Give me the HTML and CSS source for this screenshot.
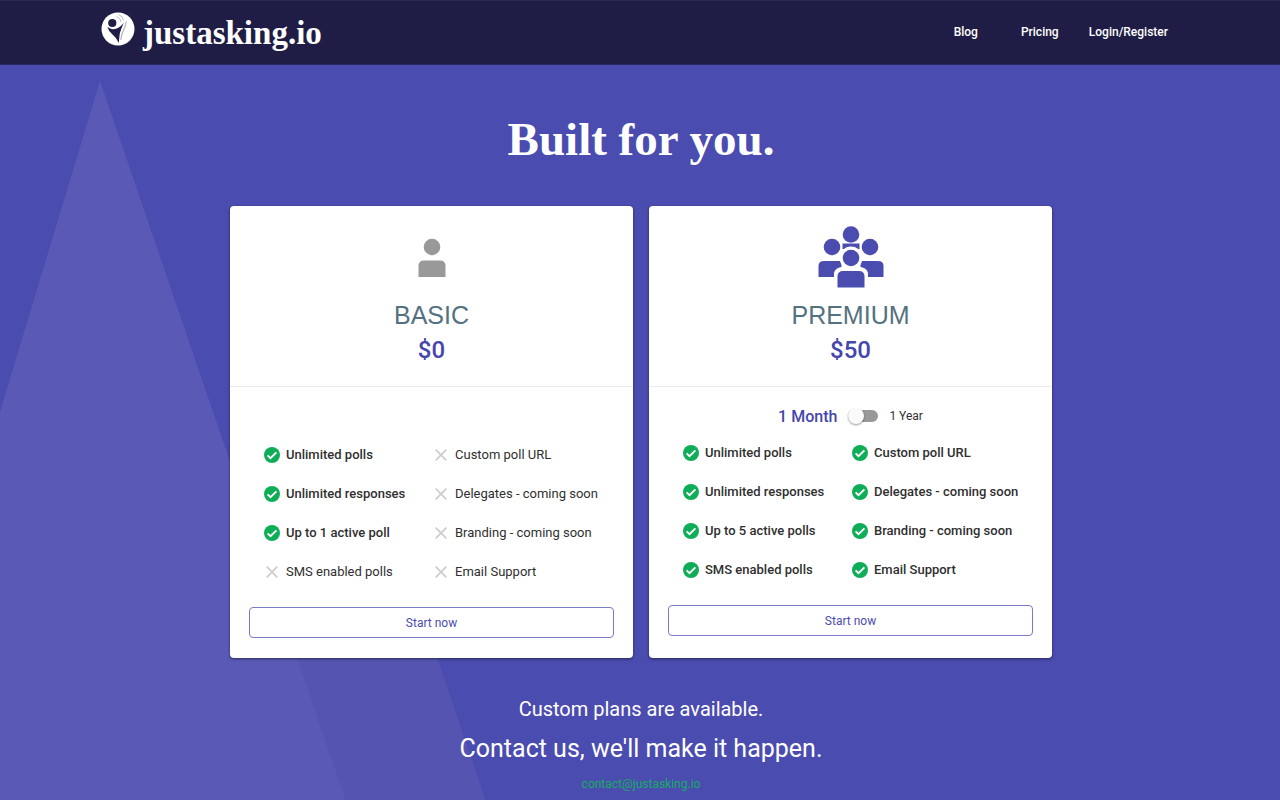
FILE: index.html
```html
<!DOCTYPE html>
<html lang="en">
<head>
<meta charset="utf-8">
<meta name="viewport" content="width=device-width, initial-scale=1">
<title>Pricing - justasking.io</title>
<link rel="stylesheet" href="styles.css">
</head>
<body>
<svg class="defs" aria-hidden="true">
  <symbol id="check" viewBox="0 0 16 16">
    <circle cx="8" cy="8" r="8" fill="#0fad57"/>
    <path d="M3.6 8.3 6.5 11.2 12.4 5.3" fill="none" stroke="#fff" stroke-width="1.9"/>
  </symbol>
  <symbol id="cross" viewBox="0 0 16 16">
    <path d="M2.7 2.7 13.3 13.3M13.3 2.7 2.7 13.3" fill="none" stroke="#cdcdcf" stroke-width="1.7"/>
  </symbol>
</svg>
<header class="topbar">
  <div class="topbar-inner">
    <a class="brand" href="#">
      <svg class="brand-mark" viewBox="0 0 34 34" aria-hidden="true">
        <circle cx="17" cy="17" r="16.5" fill="#fff"/>
        <circle cx="11.3" cy="11" r="4.1" fill="#1f1d45"/>
        <path d="M6.3 14.8Q10 18.3 15 16.8 20 15 22.8 10.5 19.8 17.5 18.7 22L17.7 31Q15.5 25.500 11.500 22.500 7.500 19.500 6.300 14.800Z" fill="#1f1d45"/>
        <path d="M15.500 4.500Q19.500 5.500 20 10M18 2.800Q22 4.200 22.500 8.500" fill="none" stroke="#b9b8c6" stroke-width="1"/>
        <path d="M25.300 9.500C24.500 16 20.800 19 19.800 28" fill="none" stroke="#b9b8c6" stroke-width="1.300"/>
      </svg>
      <span class="brand-name">justasking.io</span>
    </a>
    <nav class="nav">
      <a href="#">Blog</a>
      <a href="#">Pricing</a>
      <a href="#">Login/Register</a>
    </nav>
  </div>
</header>
<main class="hero">
  <svg class="peaks" viewBox="0 0 500 800" aria-hidden="true">
    <path d="M310 220 535 880H100Z" fill="#5555b1"/>
    <path d="M100 16 395 880H-161Z" fill="#5a5ab6"/>
  </svg>
  <h1 class="title">Built for you.</h1>
  <div class="plans">
    <section class="card">
      <div class="card-head">
        <svg class="plan-icon" viewBox="0 0 66 64" aria-hidden="true">
          <g fill="#999">
            <circle cx="33" cy="22" r="8.3"/>
            <path d="M19.500 52V41Q19.500 35.500 25 35.500H41Q46.500 35.500 46.500 41V52Z"/>
          </g>
        </svg>
        <h2 class="plan-name">BASIC</h2>
        <p class="price">$0</p>
      </div>
      <div class="card-body">
        <div class="term term-empty"></div>
        <ul class="features">
          <li class="on"><svg><use href="#check"/></svg>Unlimited polls</li>
          <li><svg><use href="#cross"/></svg>Custom poll URL</li>
          <li class="on"><svg><use href="#check"/></svg>Unlimited responses</li>
          <li><svg><use href="#cross"/></svg>Delegates - coming soon</li>
          <li class="on"><svg><use href="#check"/></svg>Up to 1 active poll</li>
          <li><svg><use href="#cross"/></svg>Branding - coming soon</li>
          <li><svg><use href="#cross"/></svg>SMS enabled polls</li>
          <li><svg><use href="#cross"/></svg>Email Support</li>
        </ul>
        <button class="start" type="button">Start now</button>
      </div>
    </section>
    <section class="card">
      <div class="card-head">
        <svg class="plan-icon" viewBox="0 0 66 64" aria-hidden="true">
          <g fill="#4b4cb0">
            <circle cx="33" cy="9.500" r="8.300"/>
            <path d="M24.500 18.500H41.500V24H24.500Z"/>
            <circle cx="14" cy="22" r="8.300"/>
            <circle cx="52" cy="22" r="8.300"/>
            <path d="M.5 52V41Q.5 36 6 36H60Q65.500 36 65.500 41V52Z"/>
            <path d="M16 53V48Q17 43 23.500 42V30H42.500V42Q49 43 50 48V53Z" fill="#fff"/>
            <circle cx="33" cy="33" r="11.500" fill="#fff"/>
            <circle cx="33" cy="33" r="8.300"/>
            <path d="M19.500 62.500V51.500Q19.500 46 25 46H41Q46.500 46 46.500 51.500V62.500Z"/>
          </g>
        </svg>
        <h2 class="plan-name">PREMIUM</h2>
        <p class="price">$50</p>
      </div>
      <div class="card-body">
        <div class="term">
          <span class="term-active">1 Month</span>
          <input class="switch" id="yearly" type="checkbox" role="switch">
          <label class="term-other" for="yearly">1 Year</label>
        </div>
        <ul class="features">
          <li class="on"><svg><use href="#check"/></svg>Unlimited polls</li>
          <li class="on"><svg><use href="#check"/></svg>Custom poll URL</li>
          <li class="on"><svg><use href="#check"/></svg>Unlimited responses</li>
          <li class="on"><svg><use href="#check"/></svg>Delegates - coming soon</li>
          <li class="on"><svg><use href="#check"/></svg>Up to 5 active polls</li>
          <li class="on"><svg><use href="#check"/></svg>Branding - coming soon</li>
          <li class="on"><svg><use href="#check"/></svg>SMS enabled polls</li>
          <li class="on"><svg><use href="#check"/></svg>Email Support</li>
        </ul>
        <button class="start" type="button">Start now</button>
      </div>
    </section>
  </div>
  <div class="contact">
    <p class="contact-lead">Custom plans are available.</p>
    <p class="contact-main">Contact us, we'll make it happen.</p>
    <a class="contact-mail" href="mailto:contact@justasking.io">contact@justasking.io</a>
  </div>
</main>
</body>
</html>
```

FILE: styles.css
```css
* {
  box-sizing: border-box;
}

body {
  display: flex;
  flex-direction: column;
  min-height: 100vh;
  margin: 0;
  background: #4b4cb0;
  color: #fff;
  font-family: Roboto, "Liberation Sans", sans-serif;
}

h1, h2, p, ul {
  margin: 0;
  padding: 0;
}

.defs {
  display: none;
}

.topbar {
  background: #1f1d45;
  border-top: 1px solid #2a2850;
  border-bottom: 1px solid #2b2963;
}

.topbar-inner {
  display: flex;
  align-items: center;
  justify-content: space-between;
  max-width: 1080px;
  min-height: 63px;
  margin: 0 auto;
}

.brand {
  display: flex;
  align-items: center;
  gap: 8px;
  color: #fff;
  text-decoration: none;
}

.brand-mark {
  width: 34px;
  height: 34px;
  margin: 0 0 8px 1px;
}

.brand-name {
  font: bold 33px/40px "Liberation Serif", serif;
}

.nav {
  display: flex;
  padding-bottom: 2px;
}

.nav a {
  min-width: 74px;
  padding: 0 12px;
  color: #fff;
  font-size: 12px;
  font-weight: 500;
  line-height: 32px;
  text-align: center;
  text-decoration: none;
}

.hero {
  position: relative;
  flex: 1;
  overflow: hidden;
  padding: 46px 16px 6px 18px;
}

.peaks {
  position: absolute;
  top: 0;
  left: 0;
  width: 500px;
  height: 800px;
  overflow: visible;
}

.title {
  position: relative;
  font: bold 47px/56px "Liberation Serif", serif;
  text-align: center;
}

.plans {
  position: relative;
  display: grid;
  grid-template-columns: 1fr 1fr;
  gap: 16px;
  max-width: 822px;
  margin: 39px auto 0;
}

.card {
  display: flex;
  flex-direction: column;
  background: #fff;
  border-radius: 4px;
  box-shadow: 0 1px 3px rgba(0, 0, 0, 0.5);
  color: #2f2f2f;
}

.card-head {
  display: flex;
  flex-direction: column;
  align-items: center;
  padding: 19px 0 17px;
  border-bottom: 1px solid #ececec;
}

.plan-icon {
  width: 66px;
  height: 64px;
}

.plan-name {
  margin-top: 10px;
  color: #54717f;
  font: 25px/32px "Liberation Sans", sans-serif;
}

.price {
  color: #4545ad;
  font-size: 24px;
  font-weight: 500;
  line-height: 38px;
}

.card-body {
  display: flex;
  flex: 1;
  flex-direction: column;
  padding: 0 19px 20px;
}

.term {
  display: flex;
  align-items: center;
  justify-content: center;
  gap: 11px;
  height: 46px;
  padding-top: 12px;
}

.term-empty {
  height: 48px;
}

.term-active {
  color: #4545ad;
  font-size: 16px;
  font-weight: 500;
}

.term-other {
  font-size: 12px;
}

.switch {
  appearance: none;
  position: relative;
  width: 30px;
  height: 12px;
  margin: 0;
  border-radius: 6px;
  background: #999;
}

.switch::before {
  content: "";
  position: absolute;
  top: -2px;
  left: 0;
  width: 16px;
  height: 16px;
  border-radius: 50%;
  background: #fafafa;
  box-shadow: 0 1px 2px rgba(0, 0, 0, 0.4);
}

.switch:checked::before {
  left: 14px;
}

.features {
  display: grid;
  grid-template-columns: 169px 1fr;
  padding-left: 15px;
  list-style: none;
}

.features li {
  display: flex;
  align-items: center;
  gap: 6px;
  font-size: 13px;
  line-height: 39px;
  white-space: nowrap;
}

.features .on {
  font-weight: 500;
}

.features svg {
  width: 16px;
  height: 16px;
}

.start {
  height: 31px;
  margin-top: 16px;
  border: 1px solid #7a7ac6;
  border-radius: 4px;
  background: #fff;
  color: #4b4cb0;
  font: 12px Roboto, sans-serif;
}

.contact {
  position: relative;
  display: flex;
  flex-direction: column;
  align-items: center;
  padding-top: 35px;
}

.contact-lead {
  font-size: 20px;
  line-height: 32px;
}

.contact-main {
  margin-top: 7px;
  font-size: 25px;
  line-height: 34px;
}

.contact-mail {
  margin-top: 8px;
  color: #14ad62;
  font-size: 12px;
  line-height: 20px;
  text-decoration: none;
}
```
